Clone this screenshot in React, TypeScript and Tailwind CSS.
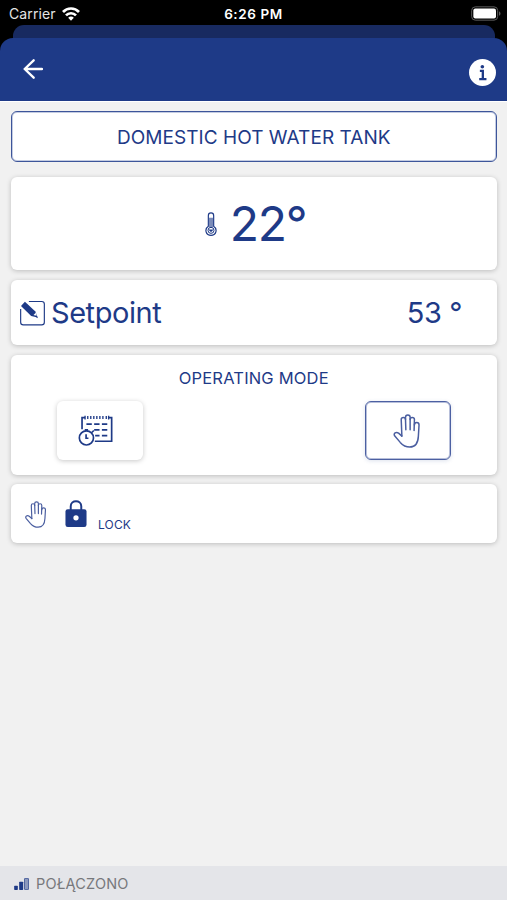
import React from 'react';
import clsx from 'clsx';

interface IconProps {
  className?: string;
}

const WifiIcon: React.FC<IconProps> = ({ className }) => (
  <svg viewBox="0 0 54 42" className={className} fill="none" stroke="currentColor" strokeWidth={8}>
    <path d="M3 15 C16 1 38 1 51 15" />
    <path d="M12 25 C20 16.500 34 16.500 42 25" />
    <path d="M27 41 L18.500 32 C23 27.500 31 27.500 35.500 32 Z" fill="currentColor" stroke="none" />
  </svg>
);

const BatteryIcon: React.FC<IconProps> = ({ className }) => (
  <svg viewBox="0 0 90 44" className={className}>
    <rect x="2" y="2" width="78" height="40" rx="11" fill="none" stroke="#5c5c5c" strokeWidth={3} />
    <rect x="7" y="7" width="68" height="30" rx="6" fill="#fff" />
    <path d="M84 15 C90 18 90 26 84 29 Z" fill="#5c5c5c" />
  </svg>
);

const BackIcon: React.FC<IconProps> = ({ className }) => (
  <svg viewBox="0 0 60 60" className={className} fill="none" stroke="currentColor" strokeWidth={7}>
    <path d="M32 4 L5 30 L32 56 M5 30 H57" strokeLinejoin="round" strokeLinecap="round" />
  </svg>
);

const InfoIcon: React.FC<IconProps> = ({ className }) => (
  <svg viewBox="0 0 82 82" className={className}>
    <circle cx="41" cy="41" r="41" fill="#fff" />
    <circle cx="40.500" cy="23.500" r="5.500" fill="#1e3a87" />
    <path d="M33 36 H42 V61 M31 61 H53" fill="none" stroke="#1e3a87" strokeWidth={7} />
  </svg>
);

const ThermometerIcon: React.FC<IconProps> = ({ className }) => (
  <svg viewBox="0 0 34 72" className={className} fill="none" stroke="currentColor">
    <path d="M9 43 V11 C9 0 25 0 25 11 V43 C38 52 32 70 17 70 C2 70 -4 52 9 43 Z" strokeWidth={3.5} />
    <path d="M14 46 V17 M20 46 V17" strokeWidth={3.5} />
    <circle cx="17" cy="55" r="9" strokeWidth={3} />
    <path d="M11 53 Q17 65 23 53 Z" fill="currentColor" strokeWidth={1} />
  </svg>
);

const EditIcon: React.FC<IconProps> = ({ className }) => (
  <svg viewBox="0 0 76 76" className={className}>
    <path
      d="M27 3 H66 Q74 3 74 11 V66 Q74 74 66 74 H10 Q2 74 2 66 V26"
      fill="none"
      stroke="currentColor"
      strokeWidth={3.5}
    />
    <path d="M3 17 L15 4 L46 33 L54 52 L34 47 Z" fill="currentColor" />
    <path d="M41 44 L48 37 L51 47 Z" fill="#fff" />
    <path d="M49 45 L55 54 L45 49 Z" fill="currentColor" />
  </svg>
);

const ScheduleIcon: React.FC<IconProps> = ({ className }) => (
  <svg viewBox="0 0 104 92" className={className} fill="none" stroke="currentColor" strokeWidth={5}>
    <path d="M12 42 V8 H21 M91 8 H100 V78 H50" />
    <path d="M29 3 V12 M38 3 V12 M47 3 V12 M56 3 V12 M65 3 V12 M74 3 V12 M84 3 V12" strokeWidth={4} />
    <path d="M21 2 V13 M91 2 V13" strokeWidth={4} />
    <path d="M25 27 H41 M48 27 H64 M71 27 H87 M48 44 H64 M71 44 H87 M51 61 H64 M71 61 H87" />
    <circle cx="25" cy="68" r="21" />
    <path d="M20 44 H30 M41 52 L47 46" />
    <path d="M24 57 V69 H31" strokeWidth={5} />
  </svg>
);

const HandIcon: React.FC<IconProps> = ({ className }) => (
  <svg
    viewBox="-2 -2 80 103"
    className={className}
    fill="none"
    stroke="currentColor"
    strokeWidth={4.5}
    strokeLinecap="round"
    strokeLinejoin="round"
  >
    <path d="M24 65 L22 15 A6.500 6.500 0 0 1 35 15 L36 46" />
    <path d="M35 15 V8 A7 7 0 0 1 49 8 V46" />
    <path d="M49 15 A6.500 6.500 0 0 1 62 15 L61 48" />
    <path d="M62 31 A7 7 0 0 1 76 31 L74 65 C73 88 64 98 48 98 C35 98 27 93 19 84 L2 64 C-2 57 6 51 14 56 L24 65" />
  </svg>
);

const LockIcon: React.FC<IconProps> = ({ className }) => (
  <svg viewBox="0 0 64 82" className={className}>
    <path d="M16 32 V19 C16 -1 48 -1 48 19 V32" fill="none" stroke="currentColor" strokeWidth={6} />
    <rect y="28" width="64" height="54" rx="7" fill="currentColor" />
    <circle cx="32" cy="54" r="8" fill="#fff" />
  </svg>
);

const SignalIcon: React.FC<IconProps> = ({ className }) => (
  <svg viewBox="0 0 44 36" className={className} fill="currentColor">
    <rect y="23" width="11" height="13" rx="2" />
    <rect x="15" y="11" width="12" height="25" rx="2" />
    <rect x="31" y="1" width="12" height="34" rx="2" fillOpacity={0.45} stroke="currentColor" strokeWidth={2} />
  </svg>
);

const Card: React.FC<{ className?: string; children: React.ReactNode }> = ({ className, children }) => (
  <section className={clsx('rounded-md bg-white shadow-[0_1px_5px_rgba(0,0,0,0.22)]', className)}>
    {children}
  </section>
);

export default function App() {
  return (
    <div className="flex h-[900px] w-[507px] flex-col overflow-hidden bg-[#f1f1f1] font-['Inter',sans-serif] text-[#1e3a87]">
      <div className="bg-black">
        <div className="grid h-[25px] grid-cols-3 items-center pt-[2px] text-white">
          <div className="flex items-center gap-[6px] pl-[9px] text-[14px] text-[#e4e4e4]">
            <span className="tracking-[0.1px]">Carrier</span>
            <WifiIcon className="h-[14px] w-[18px] text-white" />
          </div>
          <span className="pt-px text-center text-[13.500px] font-semibold tracking-[0.600px]">6:26 PM</span>
          <BatteryIcon className="mr-[6px] h-[15px] w-[30px] justify-self-end" />
        </div>
        <div className="mr-[12px] ml-[13px] h-[12.500px] rounded-t-[11px] bg-[#182a60]" />
        <header className="flex h-[64.500px] items-center justify-between rounded-t-[13px] border-b border-white bg-[#1e3a87] pr-[11px] pl-[23px] text-white">
          <BackIcon className="h-[20px] w-[20px]" />
          <InfoIcon className="mt-[7px] h-[27px] w-[27px]" />
        </header>
      </div>

      <main className="flex flex-1 flex-col pt-[9px] pr-[10px] pl-[10.500px]">
        <h1 className="flex h-[51px] items-center justify-center rounded-md border border-[#3d559a] bg-white pt-[3px] text-[19px] tracking-[0.05px] ring-1 ring-[#3d559a]/30 ring-inset">
          DOMESTIC HOT WATER TANK
        </h1>

        <Card className="mt-[15px] flex h-[92.500px] items-center justify-center gap-[12.500px] pt-[2px] pl-[4px]">
          <ThermometerIcon className="h-[24px] w-[12px]" />
          <span className="text-[48px] leading-none tracking-[-1.300px]">22°</span>
        </Card>

        <Card className="mt-[10px] flex h-[65.500px] items-center justify-between pr-[35px] pl-[9.500px]">
          <div className="flex items-center gap-[6px]">
            <EditIcon className="mt-[2px] h-[26px] w-[25px]" />
            <span className="text-[29px] tracking-[-0.450px]">Setpoint</span>
          </div>
          <span className="text-[29px] tracking-[-0.400px]">53 °</span>
        </Card>

        <Card className="mt-[9.500px] h-[120px] pt-[11px]">
          <h2 className="text-center text-[16.500px] leading-[24px] tracking-[0.180px]">OPERATING MODE</h2>
          <div className="mt-[11.500px] flex justify-between px-[46.500px]">
            <button className="flex h-[59px] w-[86px] items-center justify-center rounded-md bg-white pr-[9px] shadow-[0_1px_5px_rgba(0,0,0,0.22)]">
              <ScheduleIcon className="h-[31px] w-[35px]" />
            </button>
            <button className="flex h-[59px] w-[86px] items-center justify-center rounded-md border border-[#4c60a2] bg-white pr-[2px] shadow-[0_1px_4px_rgba(30,58,135,0.15)] ring-1 ring-[#4c60a2]/40 ring-inset">
              <HandIcon className="h-[34px] w-[27px] text-[#4a5ea0]" />
            </button>
          </div>
        </Card>

        <Card className="mt-[9.500px] flex h-[59px] items-center pl-[14px]">
          <HandIcon className="mt-[2px] h-[27px] w-[21px] text-[#4a5ea0]" />
          <LockIcon className="ml-[19.500px] h-[27px] w-[22px]" />
          <span className="mt-[22px] ml-[11px] text-[12px] tracking-[0.150px]">LOCK</span>
        </Card>
      </main>

      <footer className="flex h-[34px] items-center gap-[7px] bg-[#e4e5e9] pt-px pl-[14px] text-[14.500px] text-[#77787c]">
        <SignalIcon className="h-[12px] w-[15px] text-[#1e3a87]" />
        <span className="tracking-[0.200px]">POŁĄCZONO</span>
      </footer>
    </div>
  );
}
